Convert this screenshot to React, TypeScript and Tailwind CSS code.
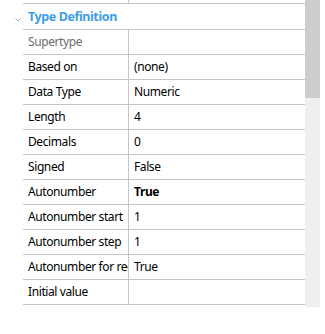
const ROWS: { label: string; value: string; muted?: boolean; bold?: boolean }[] = [
  { label: "Supertype", value: "", muted: true },
  { label: "Based on", value: "(none)" },
  { label: "Data Type", value: "Numeric" },
  { label: "Length", value: "4" },
  { label: "Decimals", value: "0" },
  { label: "Signed", value: "False" },
  { label: "Autonumber", value: "True", bold: true },
  { label: "Autonumber start", value: "1" },
  { label: "Autonumber step", value: "1" },
  { label: "Autonumber for records", value: "True" },
  { label: "Initial value", value: "" },
];

export default function App() {
  return (
    <div className="flex h-[334px] w-[325px] bg-white font-['Noto_Sans',sans-serif] text-[12px] tracking-[-0.4px] text-black">
      <div className="w-[305px] pl-[23px]">
        {/* tail of the previous section */}
        <div className="flex h-[4px] border-b border-[#c6c6c6]">
          <div className="w-[106px] border-r border-[#c6c6c6]" />
        </div>

        <div className="-ml-[23px] flex h-[25px] items-center pt-[2px]">
          <svg width="23" height="22" viewBox="0 0 23 22" className="shrink-0">
            <path d="M15.5 11.5 L18 14 L20.5 11.5" fill="none" stroke="#a8a8a8" strokeWidth="1" />
          </svg>
          <span className="pl-[5px] text-[12.5px] font-bold text-[#3c9de6]">Type Definition</span>
        </div>

        <div className="border-t border-[#c6c6c6]">
          {ROWS.map((row) => (
            <div key={row.label} className="flex h-[25px] border-b border-[#c6c6c6]">
              <div
                className={`w-[106px] shrink-0 overflow-hidden whitespace-nowrap border-r border-[#c6c6c6] pl-[5px] leading-[24px] ${
                  row.muted ? "text-[#6d6d6d]" : ""
                }`}
              >
                {row.label}
              </div>
              <div className={`pl-[5px] leading-[24px] ${row.bold ? "font-bold" : ""}`}>{row.value}</div>
            </div>
          ))}
        </div>
      </div>

      <div className="flex h-[307px] w-[15px] flex-col bg-[#efefef]">
        <div className="h-[98px] bg-[#cdcdcd]" />
      </div>
    </div>
  );
}
